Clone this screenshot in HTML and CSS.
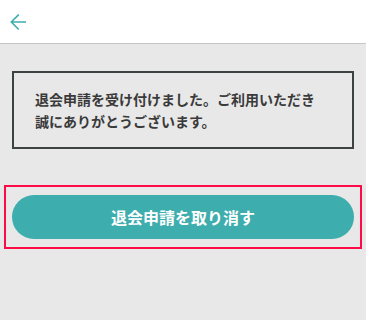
FILE: index.html
```html
<!DOCTYPE html>
<html lang="ja">
<head>
<meta charset="utf-8">
<title>退会申請</title>
<link rel="stylesheet" href="styles.css">
</head>
<body>
<header class="topbar">
  <button class="back" aria-label="戻る">
    <svg width="16" height="16" viewBox="0 0 16 16" fill="none" stroke="#3eadad" stroke-width="1.6" stroke-linecap="square">
      <path d="M15.2 8 H1.6 M8.2 1.1 L1.3 8 L8.2 14.9"/>
    </svg>
  </button>
</header>
<main class="content">
  <div class="notice">退会申請を受け付けました。ご利用いただき誠にありがとうございます。</div>
  <div class="highlight">
    <button class="cancel">退会申請を取り消す</button>
  </div>
</main>
</body>
</html>
```

FILE: styles.css
```css
html, body {
  margin: 0;
  padding: 0;
}
body {
  background: #e8e8e8;
  font-family: "Noto Sans CJK JP", "Noto Sans", sans-serif;
  color: #3a3a3a;
  height: 320px;
}
.topbar {
  height: 43px;
  background: #ffffff;
  border-bottom: 1px solid #c6c6c6;
  display: flex;
  align-items: center;
  padding-left: 10px;
}
.back {
  border: 0;
  background: none;
  padding: 0;
  width: 16px;
  height: 16px;
  display: flex;
  margin-top: 1px;
}
.content {
  padding: 27px 12px 0;
}
.notice {
  border: 2px solid #3d4242;
  padding: 15px 30px 15px 21px;
  font-size: 14px;
  line-height: 22px;
  font-weight: 700;
  color: #3a3a3a;
}
.highlight {
  margin: 36px -8px 0;
  border: 2px solid #ff0a46;
  padding: 8px 6px;
}
.cancel {
  display: block;
  width: 100%;
  height: 44px;
  border: 0;
  border-radius: 22px;
  background: #3eadad;
  color: #ffffff;
  font-family: "Noto Sans CJK JP", "Noto Sans", sans-serif;
  font-size: 16px;
  font-weight: 700;
  padding: 0;
}
```
